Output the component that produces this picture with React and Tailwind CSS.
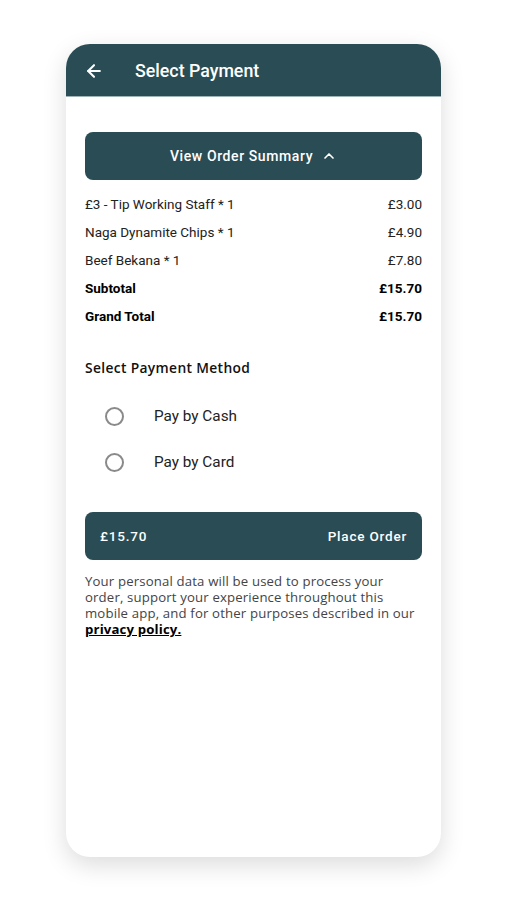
import { ArrowLeft, ChevronUp } from "lucide-react";

const items = [
  { name: "£3 - Tip Working Staff * 1", price: "£3.00" },
  { name: "Naga Dynamite Chips * 1", price: "£4.90" },
  { name: "Beef Bekana * 1", price: "£7.80" },
];

const roboto = { fontFamily: "Roboto, 'Liberation Sans', sans-serif" };
const wide = { fontFamily: "'Open Sans', 'DejaVu Sans', sans-serif" };

export default function App() {
  return (
    <div className="min-h-[900px] w-[507px] bg-white pt-[44px] pl-[66px]" style={roboto}>
      <div className="w-[375px] h-[813px] rounded-[24px] bg-white overflow-hidden shadow-[0_8px_24px_rgba(0,0,0,0.14)] flex flex-col">
        <div className="h-[53px] bg-[#2a4d55] flex items-center pl-[18px] pt-[2px] text-white border-b border-[#9fb2b6]">
          <ArrowLeft size={20} strokeWidth={2.5} />
          <span className="ml-[31px] text-[17.8px] font-medium">Select Payment</span>
        </div>

        <div className="px-[19px] pt-[35px]">
          <button className="w-full h-[48px] rounded-[8px] bg-[#2a4d55] text-white text-[14px] font-medium tracking-[0.6px] flex items-center justify-center gap-[8px]">
            View Order Summary
            <ChevronUp size={16} strokeWidth={2.5} />
          </button>

          <div className="mt-[10px] text-[13.5px] text-[#222]">
            {items.map((it) => (
              <div key={it.name} className="h-[28px] flex items-center justify-between">
                <span>{it.name}</span>
                <span>{it.price}</span>
              </div>
            ))}
            <div className="h-[28px] flex items-center justify-between font-bold text-black">
              <span>Subtotal</span>
              <span>£15.70</span>
            </div>
            <div className="h-[28px] flex items-center justify-between font-bold text-black">
              <span>Grand Total</span>
              <span>£15.70</span>
            </div>
          </div>

          <div className="mt-[28px] text-[13.8px] font-semibold tracking-[0.35px] text-[#111]" style={wide}>
            Select Payment Method
          </div>

          <div className="mt-[28px] flex flex-col gap-[26px] pl-[20px]">
            {["Pay by Cash", "Pay by Card"].map((m) => (
              <label key={m} className="flex items-center h-[20px]">
                <span className="w-[19px] h-[19px] rounded-full border-2 border-[#8a8a8a]" />
                <span className="ml-[30px] text-[15.3px] text-[#222]">{m}</span>
              </label>
            ))}
          </div>

          <button className="mt-[39px] w-full h-[48px] rounded-[8px] bg-[#2a4d55] text-white text-[13.5px] font-medium tracking-[0.8px] flex items-center justify-between px-[15px]">
            <span>£15.70</span>
            <span>Place Order</span>
          </button>

          <p className="mt-[13px] text-[13.2px] leading-[16px] tracking-[0.15px] text-[#444] whitespace-nowrap" style={wide}>
            Your personal data will be used to process your
            <br />
            order, support your experience throughout this
            <br />
            mobile app, and for other purposes described in our
            <br />
            <span className="font-bold text-black underline">privacy policy.</span>
          </p>
        </div>
      </div>
    </div>
  );
}
